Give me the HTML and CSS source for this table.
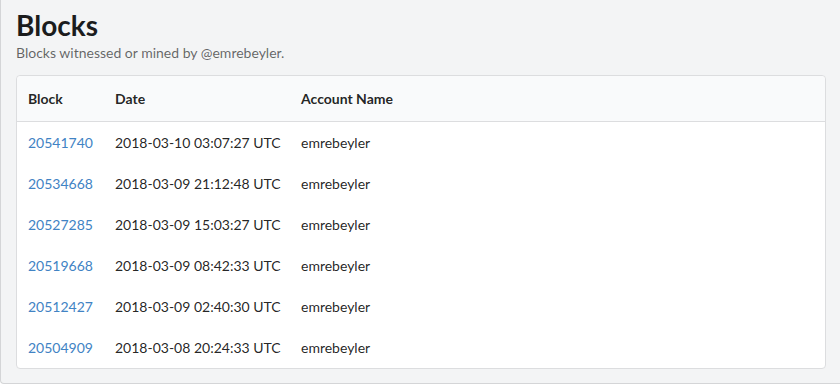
FILE: index.html
```html
<!DOCTYPE html>
<html lang="en">
<head>
  <meta charset="UTF-8">
  <title>Blocks</title>
  <link rel="stylesheet" href="styles.css">
</head>
<body>
  <div class="segment">
    <h1 class="title">Blocks</h1>
    <p class="sub">Blocks witnessed or mined by @emrebeyler.</p>

    <table class="blocks">
      <thead>
        <tr>
          <th class="c-block">Block</th>
          <th class="c-date">Date</th>
          <th>Account Name</th>
        </tr>
      </thead>
      <tbody>
        <tr>
          <td><a href="#">20541740</a></td>
          <td class="date">2018-03-10 03:07:27 UTC</td>
          <td>emrebeyler</td>
        </tr>
        <tr>
          <td><a href="#">20534668</a></td>
          <td class="date">2018-03-09 21:12:48 UTC</td>
          <td>emrebeyler</td>
        </tr>
        <tr>
          <td><a href="#">20527285</a></td>
          <td class="date">2018-03-09 15:03:27 UTC</td>
          <td>emrebeyler</td>
        </tr>
        <tr>
          <td><a href="#">20519668</a></td>
          <td class="date">2018-03-09 08:42:33 UTC</td>
          <td>emrebeyler</td>
        </tr>
        <tr>
          <td><a href="#">20512427</a></td>
          <td class="date">2018-03-09 02:40:30 UTC</td>
          <td>emrebeyler</td>
        </tr>
        <tr>
          <td><a href="#">20504909</a></td>
          <td class="date">2018-03-08 20:24:33 UTC</td>
          <td>emrebeyler</td>
        </tr>
      </tbody>
    </table>
  </div>
</body>
</html>
```

FILE: styles.css
```css
* {
  font-family: Lato, "Open Sans", sans-serif;
  box-sizing: border-box;
}
body {
  margin: 0;
  background-color: #fff;
  color: rgba(0, 0, 0, .87);
}
.segment {
  background-color: #f3f4f5;
  border-left: 1px solid #d4d5d7;
  border-bottom: 1px solid #d4d5d7;
  border-bottom-left-radius: 4px;
  padding: 9px 14px 14px 15px;
  height: 384px;
}
.title {
  margin: 0;
  font-size: 28px;
  line-height: 1.2;
  font-weight: 700;
  color: #1b1c1d;
}
.sub {
  margin: 0 0 12px;
  font-size: 14px;
  line-height: 20px;
  color: rgba(0, 0, 0, .6);
}
table.blocks {
  width: 100%;
  border-collapse: separate;
  border-spacing: 0;
  background-color: #fff;
  border: 1px solid #dcdddf;
  border-radius: 4px;
  font-size: 14px;
  line-height: 19px;
  white-space: nowrap;
}
table.blocks th {
  text-align: left;
  font-weight: 700;
  background-color: #f9fafb;
  padding: 13px 11px;
  border-bottom: 1px solid #dcdddf;
  color: rgba(0, 0, 0, .87);
}
table.blocks th:first-child {
  border-top-left-radius: 4px;
}
table.blocks th:last-child {
  border-top-right-radius: 4px;
}
table.blocks td {
  padding: 11px 11px;
}
table.blocks td.date {
  padding-right: 6px;
}
.c-block {
  width: 87px;
}
.c-date {
  width: 186px;
}
table.blocks a {
  color: #4183c4;
  text-decoration: none;
}
```
